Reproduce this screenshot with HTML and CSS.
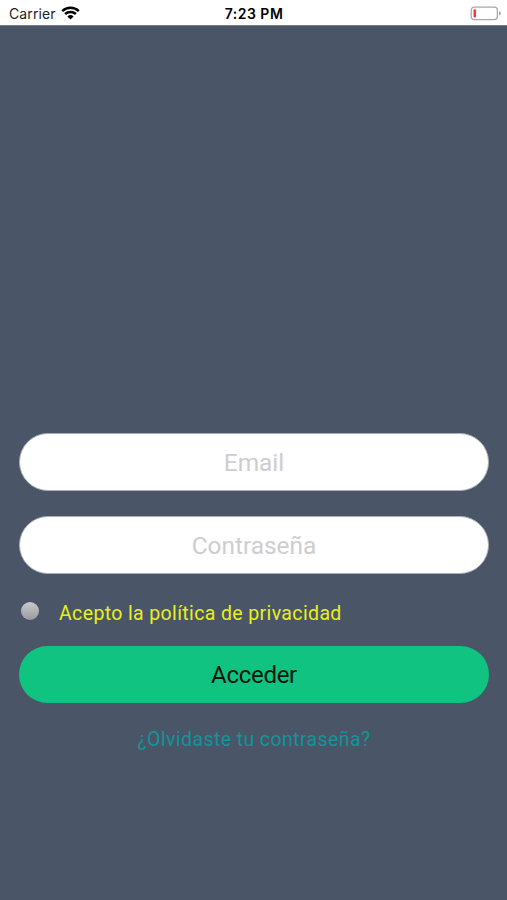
FILE: index.html
```
<!DOCTYPE html>
<html lang="es">
<head>
    <meta charset="UTF-8">
    <meta name="viewport" content="width=device-width, initial-scale=1.0">
    <title>Acceder</title>
    <link rel="stylesheet" href="styles.css">
</head>
<body>
    <header class="statusbar">
        <div class="carrier">
            <span>Carrier</span>
            <svg class="wifi" viewBox="0 0 19 14" width="19" height="14">
                <path d="M1.2 5.2 A12 12 0 0 1 17.8 5.2" />
                <path d="M4.1 8 A8 8 0 0 1 14.9 8" />
                <path class="dot" d="M6.4 10.4 A4.5 4.5 0 0 1 12.6 10.4 L9.5 13.6 Z" />
            </svg>
        </div>
        <div class="time">7:23 PM</div>
        <svg class="battery" viewBox="0 0 32 15" width="32" height="15">
            <rect class="case" x="1.2" y="1.2" width="26.2" height="12.4" rx="3" />
            <rect class="level" x="3.5" y="3.2" width="2.6" height="8.4" rx="1" />
            <path class="tip" d="M29 5.2 Q31 6 31 7.4 Q31 8.8 29 9.6 Z" />
        </svg>
    </header>
    <form class="login">
        <input class="field" type="email" placeholder="Email">
        <input class="field" type="password" placeholder="Contraseña">
        <label class="privacy">
            <span class="knob"></span>
            <span>Acepto la política de privacidad</span>
        </label>
        <button class="submit" type="button">Acceder</button>
        <a class="forgot">¿Olvidaste tu contraseña?</a>
    </form>
</body>
</html>
```
FILE: styles.css
```
*{
    box-sizing: border-box;
}
body{
    margin: 0;
    height: 900px;
    background-color: #4a5667;
    font-family: Roboto, sans-serif;
    overflow: hidden;
}

/* status bar */
.statusbar{
    display: grid;
    grid-template-columns: 1fr auto 1fr;
    align-items: center;
    height: 26px;
    padding: 1px 5px 0 9px;
    background-color: white;
    border-bottom: 1px solid #76808c;
    font-family: Inter, sans-serif;
    font-size: 14px;
    color: #222;
}
.carrier{
    display: flex;
    align-items: center;
    gap: 5px;
    letter-spacing: .1px;
}
.wifi{
    fill: none;
    stroke: black;
    stroke-width: 2.5;
}
.wifi .dot{
    fill: black;
    stroke: none;
}
.time{
    margin-left: -3px;
    font-weight: 600;
    letter-spacing: .5px;
    color: black;
}
.battery{
    justify-self: end;
}
.case{
    fill: white;
    stroke: #a9a9a9;
    stroke-width: 1.3;
}
.level{
    fill: #fa3a35;
}
.tip{
    fill: #a9a9a9;
}

/* login form */
.login{
    display: flex;
    flex-direction: column;
    padding: 407px 18px 0 19px;
}
.field{
    height: 58px;
    margin: 0 0 25px;
    padding: 0 20px;
    border: 1px solid #a9b0b9;
    border-radius: 29px;
    background-color: white;
    font-family: inherit;
    font-size: 24.4px;
    text-align: center;
}
.field::placeholder{
    color: #cdcdd0;
    opacity: 1;
}
.privacy{
    display: flex;
    align-items: center;
    gap: 19px;
    height: 28px;
    margin-bottom: 19px;
    padding-left: 3px;
    font-size: 19.5px;
    letter-spacing: .37px;
    color: #e9ef1b;
}
.knob{
    width: 18px;
    height: 18px;
    margin: -4px 1px 0 -1px;
    border-radius: 50%;
    background: linear-gradient(#c9cacd, #989a9f);
}
.submit{
    height: 57px;
    border: none;
    border-radius: 29px;
    background-color: #10c380;
    font-family: inherit;
    font-size: 24px;
    letter-spacing: -.3px;
    color: #04140e;
}
.forgot{
    margin-top: 25px;
    font-size: 19.5px;
    letter-spacing: .4px;
    text-align: center;
    color: #12949a;
}
```
